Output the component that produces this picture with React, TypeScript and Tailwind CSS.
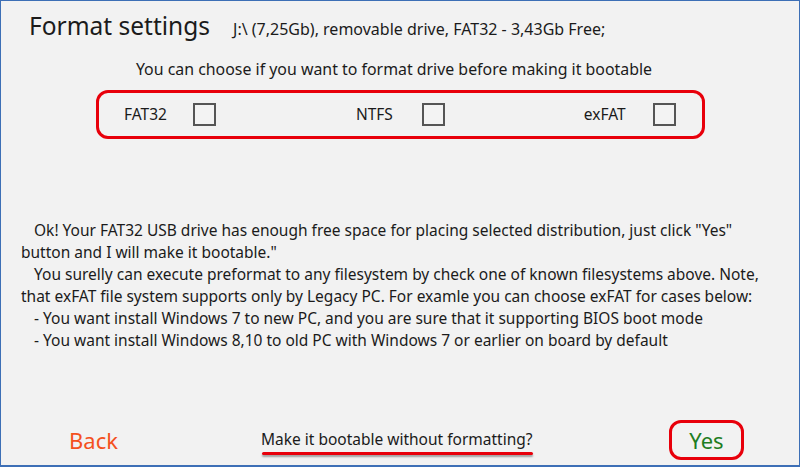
import React from "react";

function Box() {
  return <div className="w-[23px] h-[23px] border-2 border-[#555] bg-[#f3f3f3]" />;
}

export default function App() {
  const font = { fontFamily: '"Noto Sans", "Open Sans", sans-serif' };
  return (
    <div style={font} className="w-[800px] h-[467px] bg-[#f2f2f2] border-x border-t border-b-2 border-[#3d6fb6] text-[#1b1b1b] flex flex-col overflow-hidden">
      <div className="flex items-baseline pl-[28px] pt-[8px]">
        <span className="text-[24.5px] leading-[34px]">Format settings</span>
        <span className="text-[16px] ml-[23px]">J:\ (7,25Gb), removable drive, FAT32 - 3,43Gb Free;</span>
      </div>
      <div className="text-center text-[15.9px] mt-[16px] leading-[20px] pr-[12px]">You can choose if you want to format drive before making it bootable</div>
      <div className="mt-[11px] ml-[95px] w-[609px] h-[49px] border-[3px] border-[#e8000b] rounded-[12px] flex items-center text-[15.5px]">
        <span className="ml-[25px]">FAT32</span>
        <div className="ml-[26px]"><Box /></div>
        <span className="ml-[140px]">NTFS</span>
        <div className="ml-[29px]"><Box /></div>
        <span className="ml-[139px]">exFAT</span>
        <div className="ml-[27px]"><Box /></div>
      </div>
      <div className="mt-[80px] pl-[20px] text-[15.5px] leading-[22px] whitespace-nowrap">
        <div className="pl-[13px]">Ok! Your FAT32 USB drive has enough free space for placing selected distribution, just click "Yes"</div>
        <div>button and I will make it bootable."</div>
        <div className="pl-[13px]">You surelly can execute preformat to any filesystem by check one of known filesystems above. Note,</div>
        <div>that exFAT file system supports only by Legacy PC. For examle you can choose exFAT for cases below:</div>
        <div className="pl-[13px]">- You want install Windows 7 to new PC, and you are sure that it supporting BIOS boot mode</div>
        <div className="pl-[13px]">- You want install Windows 8,10 to old PC with Windows 7 or earlier on board by default</div>
      </div>
      <div className="mt-auto mb-[5px] flex items-center h-[40px]">
        <span className="ml-[68px] text-[22px] text-[#f4511e]">Back</span>
        <div className="ml-[143px] relative text-[15.5px]">
          <span>Make it bootable without formatting?</span>
          <div className="absolute left-[1px] right-0 top-[24px] h-[3px] bg-[#e8000b] rounded-full shadow-[0_2px_2px_rgba(0,0,0,0.35)]" />
        </div>
        <div className="ml-auto mr-[55px] w-[75px] h-[40px] border-[3px] border-[#e8000b] rounded-[12px] flex items-center justify-center text-[22px] text-[#1e7d22]">Yes</div>
      </div>
    </div>
  );
}
